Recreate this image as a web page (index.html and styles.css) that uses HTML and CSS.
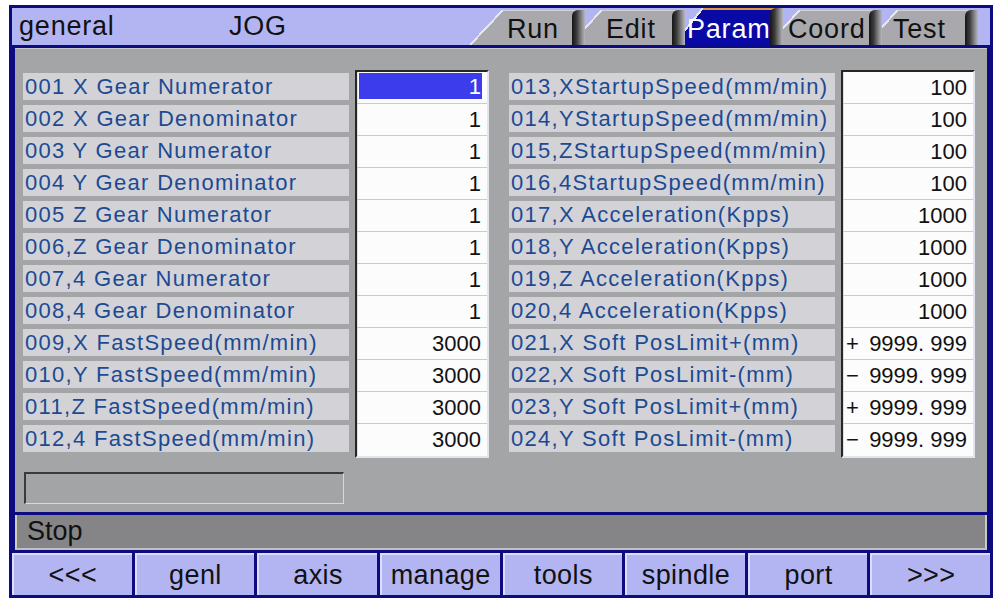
FILE: index.html
```html
<!DOCTYPE html>
<html>
<head>
    <title>general JOG - Param</title>
    <meta charset="UTF-8">
    <link rel="stylesheet" href="styles.css">
</head>
<body>
    <div class="screen">
        <div class="header">
            <span class="mode">general</span>
            <span class="state">JOG</span>
            <div class="tabs">
                <div class="tab tab-run">Run</div>
                <div class="tab tab-edit">Edit</div>
                <div class="tab tab-param active">Param</div>
                <div class="tab tab-coord">Coord</div>
                <div class="tab tab-test">Test</div>
            </div>
        </div>

        <div class="panel">
            <div class="params">
                <div class="group">
                    <div class="labels">
                        <div class="label">001 X Gear Numerator</div>
                        <div class="label">002 X Gear Denominator</div>
                        <div class="label">003 Y Gear Numerator</div>
                        <div class="label">004 Y Gear Denominator</div>
                        <div class="label">005 Z Gear Numerator</div>
                        <div class="label">006,Z Gear Denominator</div>
                        <div class="label">007,4 Gear Numerator</div>
                        <div class="label">008,4 Gear Denominator</div>
                        <div class="label">009,X FastSpeed(mm/min)</div>
                        <div class="label">010,Y FastSpeed(mm/min)</div>
                        <div class="label">011,Z FastSpeed(mm/min)</div>
                        <div class="label">012,4 FastSpeed(mm/min)</div>
                    </div>
                    <div class="values">
                        <div class="cell selected"><span class="hl">1</span></div>
                        <div class="cell">1</div>
                        <div class="cell">1</div>
                        <div class="cell">1</div>
                        <div class="cell">1</div>
                        <div class="cell">1</div>
                        <div class="cell">1</div>
                        <div class="cell">1</div>
                        <div class="cell">3000</div>
                        <div class="cell">3000</div>
                        <div class="cell">3000</div>
                        <div class="cell">3000</div>
                    </div>
                </div>

                <div class="group">
                    <div class="labels">
                        <div class="label">013,XStartupSpeed(mm/min)</div>
                        <div class="label">014,YStartupSpeed(mm/min)</div>
                        <div class="label">015,ZStartupSpeed(mm/min)</div>
                        <div class="label">016,4StartupSpeed(mm/min)</div>
                        <div class="label">017,X Acceleration(Kpps)</div>
                        <div class="label">018,Y Acceleration(Kpps)</div>
                        <div class="label">019,Z Acceleration(Kpps)</div>
                        <div class="label">020,4 Acceleration(Kpps)</div>
                        <div class="label">021,X Soft PosLimit+(mm)</div>
                        <div class="label">022,X Soft PosLimit-(mm)</div>
                        <div class="label">023,Y Soft PosLimit+(mm)</div>
                        <div class="label">024,Y Soft PosLimit-(mm)</div>
                    </div>
                    <div class="values">
                        <div class="cell">100</div>
                        <div class="cell">100</div>
                        <div class="cell">100</div>
                        <div class="cell">100</div>
                        <div class="cell">1000</div>
                        <div class="cell">1000</div>
                        <div class="cell">1000</div>
                        <div class="cell">1000</div>
                        <div class="cell signed"><span>+</span><span>9999. 999</span></div>
                        <div class="cell signed"><span>−</span><span>9999. 999</span></div>
                        <div class="cell signed"><span>+</span><span>9999. 999</span></div>
                        <div class="cell signed"><span>−</span><span>9999. 999</span></div>
                    </div>
                </div>
            </div>

            <div class="input-box"></div>
        </div>

        <div class="status">Stop</div>

        <div class="buttons">
            <div class="btn">&lt;&lt;&lt;</div>
            <div class="btn">genl</div>
            <div class="btn">axis</div>
            <div class="btn">manage</div>
            <div class="btn">tools</div>
            <div class="btn">spindle</div>
            <div class="btn">port</div>
            <div class="btn">&gt;&gt;&gt;</div>
        </div>
    </div>
</body>
</html>
```

FILE: styles.css
```css
* {
    box-sizing: border-box;
}
body {
    margin: 0;
    background: #fff;
    font-family: "Liberation Sans", Arial, sans-serif;
    color: #111;
}
.screen {
    width: 984px;
    height: 593px;
    margin: 5px 0 0 9px;
    padding: 3px;
    background: #0c0c80;
    display: flex;
    flex-direction: column;
    gap: 3px;
}

/* top bar with mode + tabs */
.header {
    height: 37px;
    flex: none;
    background: #b3b5f3;
    display: flex;
    align-items: flex-end;
    padding-left: 7px;
    font-size: 27px;
    letter-spacing: 0.8px;
}
.mode,
.state {
    align-self: center;
    line-height: 37px;
}
.mode {
    width: 210px;
}
.tabs {
    margin-left: auto;
    margin-right: 12px;
    display: flex;
    align-items: flex-end;
}
.tab {
    --d: 33px;
    --bg: #a9a9ad;
    position: relative;
    height: 35px;
    display: flex;
    align-items: center;
    padding-top: 3px;
    white-space: nowrap;
    background:
        linear-gradient(#d2d2da, #d2d2da) var(--d) 0 / 100% 1px no-repeat,
        linear-gradient(to bottom right, transparent calc(50% - 1px), #e6e6ee calc(50% - 1px), #e6e6ee calc(50% + 1px), var(--bg) calc(50% + 1px)) 0 0 / var(--d) 100% no-repeat,
        linear-gradient(var(--bg), var(--bg)) var(--d) 0 / 100% 100% no-repeat;
}
.tab::after {
    content: "";
    position: absolute;
    top: 0;
    right: 0;
    bottom: 0;
    width: 13px;
    border-top-left-radius: 6px;
    background: linear-gradient(to right, #151515, #3a3a3a 35%, #8a8a8e 75%, #b6b6bc);
}
.tab-run {
    width: 115px;
    padding-left: 37px;
    z-index: 5;
}
.tab-edit {
    width: 116px;
    margin-left: -16px;
    padding-left: 37px;
    z-index: 4;
}
.tab-param {
    --d: 30px;
    width: 110px;
    margin-left: -12px;
    padding-left: 14px;
    z-index: 3;
}
.tab-coord {
    width: 115px;
    margin-left: -16px;
    padding-left: 21px;
    z-index: 2;
}
.tab-test {
    width: 113px;
    margin-left: -17px;
    padding-left: 28px;
    z-index: 1;
}
.tab.active {
    --bg: #0909a6;
    height: 37px;
    padding-top: 5px;
    color: #fff;
    background:
        linear-gradient(#e09a3c, #e09a3c) var(--d) 0 / 100% 2px no-repeat,
        linear-gradient(to bottom right, transparent calc(50% - 1px), #e6e6ee calc(50% - 1px), #e6e6ee calc(50% + 1px), var(--bg) calc(50% + 1px)) 0 0 / var(--d) 100% no-repeat,
        linear-gradient(var(--bg), var(--bg)) var(--d) 0 / 100% 100% no-repeat;
}

/* parameter panel */
.panel {
    height: 464px;
    flex: none;
    margin: 0 3px;
    background: #a3a5a7;
    border-top: 1px solid #c6c8cc;
    padding: 21px 12px 0 8px;
}
.params {
    display: flex;
    gap: 20px;
}
.group {
    display: flex;
    gap: 6px;
}
.labels {
    width: 326px;
    padding-top: 3px;
    display: flex;
    flex-direction: column;
    gap: 5px;
}
.label {
    height: 27px;
    line-height: 27px;
    background: #d3d3d7;
    color: #1c4a92;
    font-size: 22px;
    letter-spacing: 1.3px;
    padding-left: 2px;
    white-space: nowrap;
}
.values {
    width: 134px;
    background: #fcfcfc;
    border-top: 2px solid #262626;
    border-left: 2px solid #262626;
    border-right: 2px solid #e4e4ee;
    border-bottom: 2px solid #e4e4ee;
    box-shadow: inset 1px 0 #e6e6b4;
}
.cell {
    height: 32px;
    border-bottom: 1px solid #c9c9ce;
    font-size: 22px;
    line-height: 31px;
    text-align: right;
    padding-right: 6px;
}
.cell:last-child {
    border-bottom: none;
}
.cell.selected {
    padding: 1px 5px 3px 2px;
}
.hl {
    display: block;
    height: 26px;
    line-height: 27px;
    background: #3c3cec;
    color: #fff;
    padding-right: 1px;
}
.cell.signed {
    display: flex;
    justify-content: space-between;
    padding-left: 3px;
}
.input-box {
    width: 320px;
    height: 32px;
    margin: 14px 0 0 1px;
    background: #a2a4a6;
    border-top: 2px solid #3a3a3a;
    border-left: 2px solid #3a3a3a;
    border-right: 1px solid #d8d8dc;
    border-bottom: 1px solid #d8d8dc;
}

/* status line */
.status {
    height: 35px;
    flex: none;
    margin: 0 3px;
    background: #858587;
    border-left: 2px solid #d0d0b4;
    border-right: 2px solid #c8c8cc;
    border-bottom: 2px solid #c0c0c4;
    font-size: 27px;
    line-height: 33px;
    padding-left: 10px;
}

/* soft keys */
.buttons {
    height: 42px;
    flex: none;
    display: flex;
    gap: 3px;
}
.btn {
    flex: 1;
    background: #b3b5f3;
    border-top: 2px solid #dcdcfc;
    border-left: 2px solid #dcdcfc;
    text-align: center;
    font-size: 27px;
    letter-spacing: 0.4px;
    line-height: 40px;
}
```
